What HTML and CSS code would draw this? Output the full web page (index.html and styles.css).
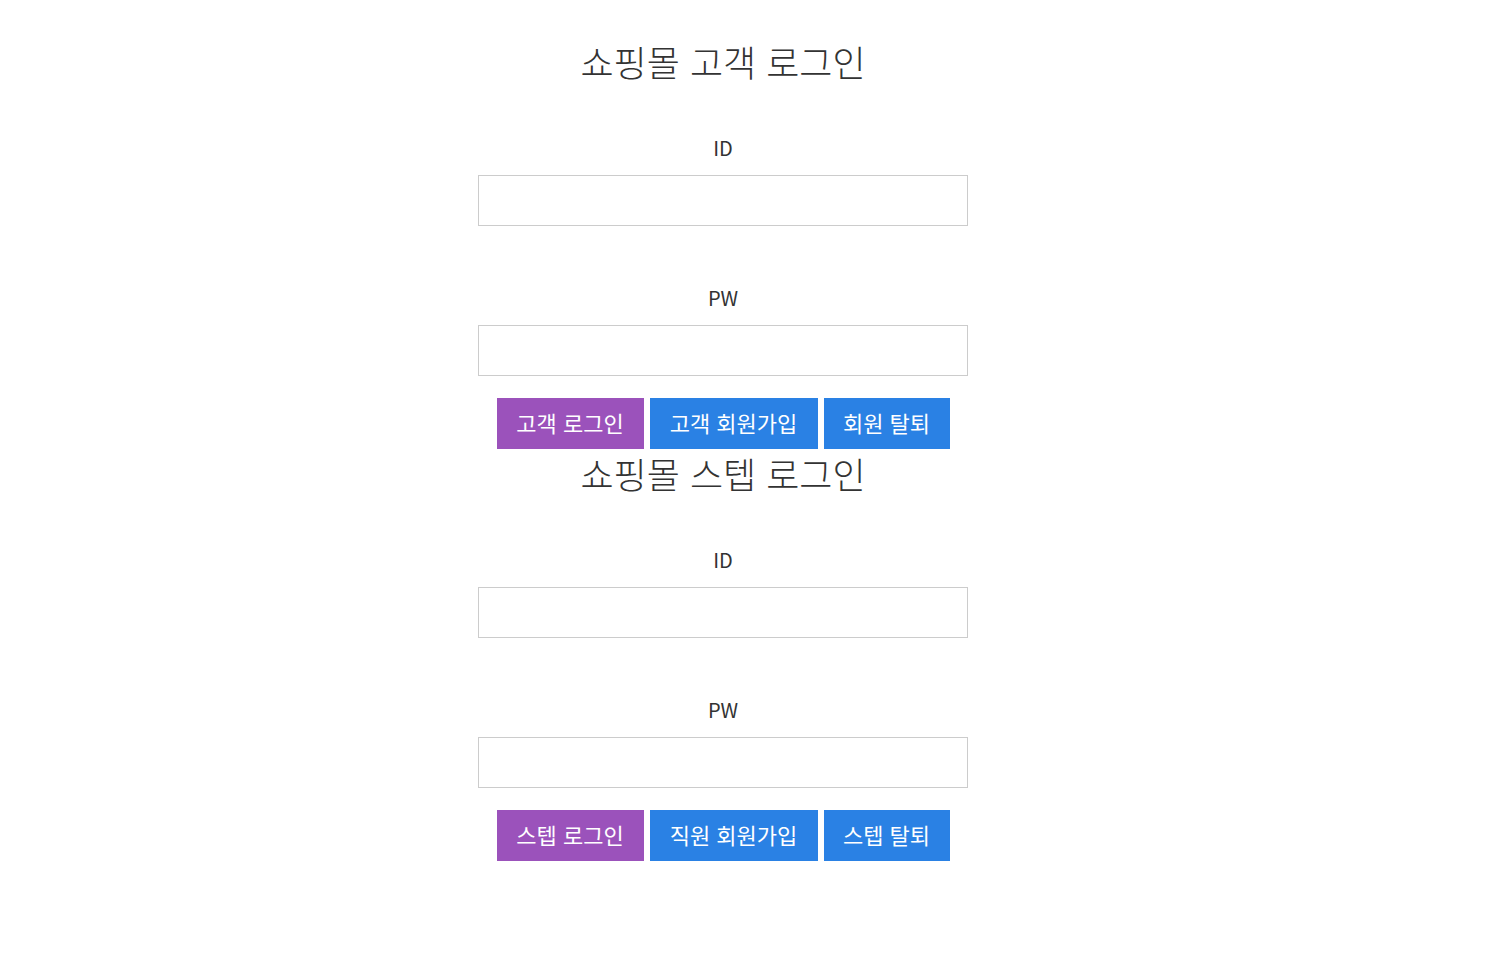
FILE: index.html
```html
<!DOCTYPE html>
<html lang="ko">
<head>
<meta charset="utf-8">
<title>쇼핑몰 로그인</title>
<link rel="stylesheet" href="styles.css">
</head>
<body>
<main class="page">
  <section class="login">
    <h1 class="title">쇼핑몰 고객 로그인</h1>
    <label class="field-label" for="cid">ID</label>
    <input class="field" id="cid" type="text">
    <label class="field-label pw" for="cpw">PW</label>
    <input class="field" id="cpw" type="password">
    <div class="actions">
      <button class="btn btn-purple w1">고객 로그인</button>
      <button class="btn btn-blue w2">고객 회원가입</button>
      <button class="btn btn-blue w3">회원 탈퇴</button>
    </div>
  </section>
  <section class="login">
    <h1 class="title">쇼핑몰 스텝 로그인</h1>
    <label class="field-label" for="sid">ID</label>
    <input class="field" id="sid" type="text">
    <label class="field-label pw" for="spw">PW</label>
    <input class="field" id="spw" type="password">
    <div class="actions">
      <button class="btn btn-purple w1">스텝 로그인</button>
      <button class="btn btn-blue w2">직원 회원가입</button>
      <button class="btn btn-blue w3">스텝 탈퇴</button>
    </div>
  </section>
</main>
</body>
</html>
```
FILE: styles.css
```css
html, body {
  margin: 0;
  padding: 0;
  background: #fff;
}
body {
  font-family: "Noto Sans CJK KR", "Noto Sans", sans-serif;
  color: #333;
}
.page {
  width: 490px;
  margin-left: 478px;
  padding-top: 37px;
}
.login {
  display: flex;
  flex-direction: column;
  align-items: center;
}
.title {
  margin: 0;
  font-size: 36px;
  font-weight: 300;
  line-height: 48px;
  height: 48px;
  white-space: nowrap;
}
.field-label {
  display: block;
  margin-top: 49px;
  font-size: 20px;
  line-height: 28px;
}
.field-label.pw {
  margin-top: 58px;
}
.field {
  box-sizing: border-box;
  width: 490px;
  height: 51px;
  margin-top: 13px;
  border: 1px solid #ccc;
  padding: 0 10px;
  font-size: 18px;
  font-family: inherit;
  outline: none;
}
.actions {
  display: flex;
  gap: 6px;
  margin-top: 22px;
}
.btn {
  height: 51px;
  border: 0;
  padding: 0 0 3px;
  color: #fff;
  font-family: inherit;
  font-size: 22px;
  line-height: 48px;
  cursor: pointer;
}
.btn-purple { background: #9b52bb; }
.btn-blue { background: #2a81e4; }
.w1 { width: 147px; }
.w2 { width: 168px; }
.w3 { width: 126px; }
```
